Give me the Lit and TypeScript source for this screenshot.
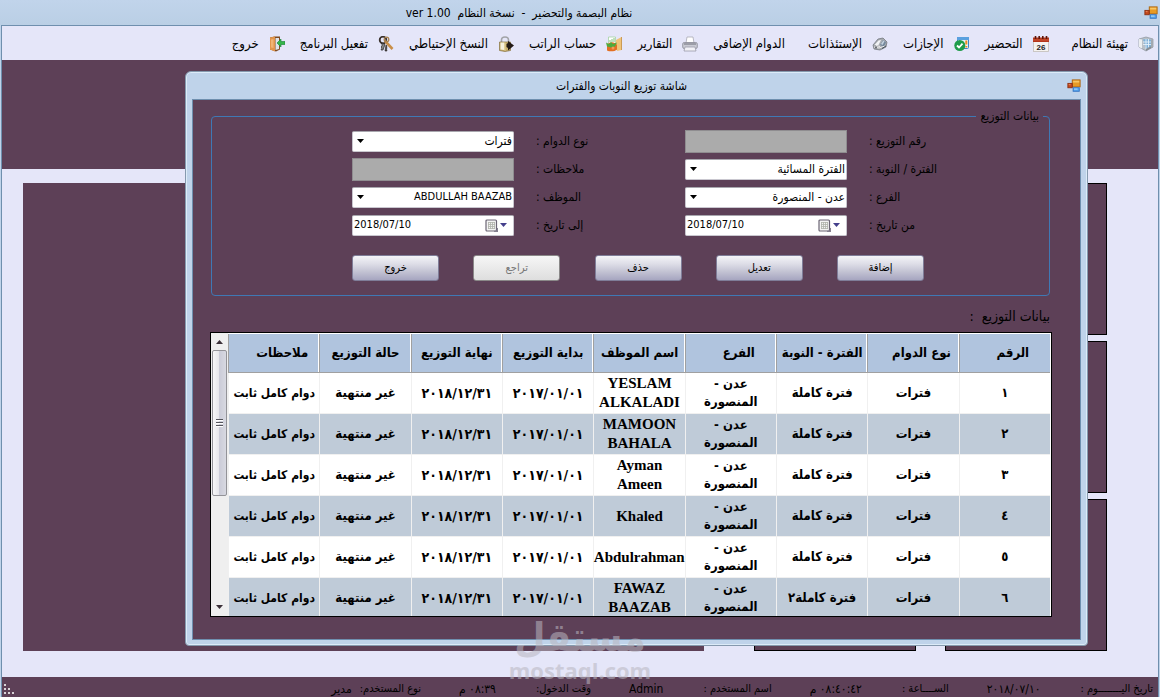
import { LitElement, html, css, svg, nothing } from "lit";
import { customElement, property, state } from "lit/decorators.js";

const icons: Record<string, unknown> = {
  app: svg`<rect x="6" y="1" width="9" height="8" fill="#e79a24" stroke="#a9630f"/><path d="M7 2h7v2H7z" fill="#f7c766"/><rect x="1" y="5" width="5" height="5" fill="#c4481c" stroke="#8b2f10"/><path d="M2 6h2v1H2z" fill="#ef9468"/><rect x="7" y="10" width="7" height="4" fill="#5aa9ee" stroke="#2f6fc0"/><path d="M8 11h4v1H8z" fill="#c1e2ff"/>`,
  setup: svg`<path d="M1 3 8 1l7 2v8l-7 4-7-4z" fill="#b9c0c8" stroke="#8b939c" stroke-width=".7"/><path d="M1 3l3 .5v9L1 11z" fill="#eceff1"/><path d="M5 3.500 8 3l5 .8v6.800L8 13z" fill="#7fb0d8"/><path d="M5 6h8M5 8.500h8M8 3v10M10.500 3v8.500" stroke="#e3f0fa" stroke-width=".9"/><path d="M8 13v2l7-4V9z" fill="#868d94"/><path d="M13 3.500 15 3v8l-2 1z" fill="#a3a9b0"/>`,
  attend: svg`<rect x=".5" y="5" width="15" height="10.500" fill="#f5f3f0" stroke="#c3beb9" stroke-width=".8"/><path d="M0 1.500h16V6H0z" fill="#b5371c"/><path d="M2.500 0v3M6.200 0v3M9.800 0v3M13.500 0v3" stroke="#5d1508" stroke-width="1.600"/><path d="M0 4h16" stroke="#d5643f" stroke-width=".7"/><text x="8" y="13.500" font-size="8" font-weight="bold" font-family="Liberation Sans" text-anchor="middle" fill="#222">26</text>`,
  leave: svg`<rect x="3.500" y="1.500" width="11" height="11" rx="1" fill="#e6f1fb" stroke="#3c84c8"/><path d="M3 1h12v3H3z" fill="#5aa0df"/><path d="M12.300 4.500v4M12.300 10v1.500" stroke="#ef8a1e" stroke-width="2"/><circle cx="5.800" cy="9.500" r="5.500" fill="#1f9c4a"/><path d="m3 9.500 2 2 3.500-3.800" stroke="#fff" stroke-width="1.800" fill="none"/>`,
  permit: svg`<path d="M1 9 6 3l5-1 4 4-1 5-6 3-6-1z" fill="#a7abb0" stroke="#6a6f75" stroke-width=".7"/><path d="m2.500 9 4-4.500L9 4 6.500 9z" fill="#f1f3f5"/><path d="m8 9 3-5 3 2-2 5z" fill="#75899d"/><path d="m9 8 2.200-3.500 1.300.8L10.500 9z" fill="#c5d2de"/><path d="m2 11 5 1 6-2M4 9.500l4 1" stroke="#ececec" fill="none"/><path d="m10 12.500 4-2.500" stroke="#46505a"/><circle cx="4" cy="11.500" r="1" fill="#60656a"/>`,
  reports: svg`<path d="M4 7 5 1h6l1 6z" fill="#fff" stroke="#a9a9b4" stroke-width=".8"/><rect x=".7" y="6.500" width="14.600" height="6" rx="1.500" fill="#c9cad3" stroke="#898a96" stroke-width=".8"/><path d="M2 8h12" stroke="#6f707c"/><path d="M3 11h10l1 4H2z" fill="#f2f2f7" stroke="#9b9ba8" stroke-width=".8"/>`,
  salary: svg`<path d="M2.500 1h7v7h-7z" fill="#fff" stroke="#9ccf9a" stroke-width=".7"/><path d="M4 6V4M6 6V3M8 6V2" stroke="#7fc07c"/><path d="m10 4 5.500-3v13l-4 1-2-2z" fill="#f0c479"/><path d="M15.500 1v13" stroke="#c38c3c" stroke-width=".8"/><path d="M1 9c3-4 8-3 10 0v4.500c-2 2-7 2.500-10 1z" fill="#e36f23"/><path d="m0 6.500 3 1.500 2-2 2 2 4-1.500-2 4-4 1-4-1z" fill="#50aa3d"/><circle cx="7" cy="12" r="1.500" fill="#f39a55"/>`,
  backup: svg`<path d="M3.500 7V4c0-4 7-4 7 0v3" fill="none" stroke="#a2a4a8" stroke-width="1.600"/><path d="M1.500 6h11v8.500l-5.500 1-5.500-1z" fill="#c7ad6a" stroke="#84713f" stroke-width=".7"/><path d="M2.500 6.500H6V14l-3.500-.5z" fill="#f6f0dc"/><path d="M6 6.500h1.500V15L6 14z" fill="#e2cf98"/><path d="m10 5 6 4.500-6 5V12l-1.500-1V8L10 7z" fill="#241a16"/>`,
  activate: svg`<circle cx="5" cy="4" r="3.300" fill="none" stroke="#3a312c" stroke-width="1.800"/><path d="M7 5 14.500 13" stroke="#c98e47" stroke-width="2.600"/><circle cx="8.500" cy="3.500" r="2.300" fill="none" stroke="#a98250" stroke-width="1.300"/><path d="m4 7 3 1.500-2 5.500H3l1-2-1-1 1-1z" fill="#8a8987" stroke="#2a2625" stroke-width=".7"/><path d="m8 9 1 1-.5 1 .5 1-.5 1 .5 2H7z" fill="#4a4644" stroke="#2a2625" stroke-width=".6"/>`,
  exit: svg`<path d="M1 1.500 5.500.5H11v13l-4 2-6-2z" fill="#7e4d24"/><path d="m1 1.500 5-1V15.500l-5-2z" fill="#e2954c"/><path d="M2 3.500l2.500-.5v9L2 11.500z" fill="#f1b474"/><path d="M6.500 2H10v11l-3.500 1z" fill="#dfe3ea"/><path d="m8 7 4-4v2.500h4v3h-4V11z" fill="#34b54b" stroke="#158032" stroke-width=".6"/>`,
  calendar: svg`<rect x="1" y="1" width="10.500" height="11" rx="1" fill="#f3f3f3" stroke="#6c6675" stroke-width="1.200"/><path d="M3 3.500h7M3 5.500h7M3 7.500h7M3 9.500h7M3.500 3v7M5.500 3v7M7.500 3v7M9.500 3v7" stroke="#aeb2a9" stroke-width=".8"/><path d="M9 12.500h3.500V9" fill="none" stroke="#858090" stroke-width="1.300"/>`,
};

const icon = (name: string, box = 16) =>
  html`<svg class="icon" viewBox="0 0 ${box} ${box}" aria-hidden="true">${icons[name]}</svg>`;

const base = css`
  * { box-sizing: border-box; }
  :host { font: 11px/16px "DejaVu Sans Condensed", "DejaVu Sans", Tahoma, sans-serif; color: #000; }
  button, input, select { font: inherit; color: inherit; margin: 0; border: 0; padding: 0; border-radius: 0; }
  .icon { display: block; width: 16px; height: 16px; flex: none; }
`;

interface Shift {
  no: string;
  shift: string;
  employee: string;
}

@customElement("shift-table")
class ShiftTable extends LitElement {
  @property({ attribute: false }) rows: Shift[] = [];

  static styles = [base, css`
    :host { display: flex; height: 285px; border: 1px solid #000; background: #fff; overflow: hidden; }
    .view { flex: 1; min-width: 0; overflow: hidden; padding: 1px 1px 0 0; }
    table { width: 100%; table-layout: fixed; border-collapse: separate; border-spacing: 0; font: bold 15px/19px "Liberation Serif", "DejaVu Sans Condensed", serif; }
    th, td { padding: 0; text-align: center; vertical-align: middle; }
    th { height: 39px; font: bold 13px/18px "DejaVu Sans Condensed", "DejaVu Sans", sans-serif; background: #b0c4de; border-bottom: 1px solid #a0a0a0; border-inline-end: 1px solid #a0a0a0; box-shadow: inset -1px 0 #fff; }
    th:first-child { box-shadow: none; }
    th.narrow { padding-left: 16px; }
    td { height: 41px; border-bottom: 1px solid #f0f0f0; border-inline-end: 1px solid #f0f0f0; }
    td.ar { font: bold 13px/18px "DejaVu Sans Condensed", "DejaVu Sans", sans-serif; }
    td.note { font: bold 12px/18px "DejaVu Sans Condensed", "DejaVu Sans", sans-serif; }
    td.day { font: bold 14px/18px "DejaVu Sans Condensed", "DejaVu Sans", sans-serif; }
    tr:nth-child(even) td { background: #bfcbd8; }
    .bar { width: 17px; flex: none; display: flex; flex-direction: column; background: #efefef; padding: 1px; }
    .step { height: 16px; background: none; display: grid; place-items: center; }
    .step svg { width: 7px; height: 4px; }
    .track { flex: 1; }
    .thumb { height: 146px; border: 1px solid #939398; border-radius: 2px; background: linear-gradient(90deg, #f7f7f8, #e6e6ea 45%, #cbccd8 50%, #d8d9e1); display: grid; place-items: center; }
    .grip { width: 7px; height: 8px; background: repeating-linear-gradient(#55555c 0 1px, #fff 1px 2px, transparent 2px 3px); }
  `];

  render() {
    const heads: [string, string][] = [
      ["الرقم", "narrow"], ["نوع الدوام", "narrow"], ["الفترة - النوبة", ""], ["الفرع", "narrow"], ["اسم الموظف", ""],
      ["بداية التوزيع", ""], ["نهاية التوزيع", ""], ["حالة التوزيع", ""], ["ملاحظات", "narrow"],
    ];
    return html`
      <div class="view">
        <table>
          <thead><tr>${heads.map(([text, kind]) => html`<th class=${kind} scope="col">${text}</th>`)}</tr></thead>
          <tbody>
            ${this.rows.map((r) => html`<tr>
              <td class="ar">${r.no}</td>
              <td class="ar">فترات</td>
              <td class="ar">${r.shift}</td>
              <td class="ar">عدن - المنصورة</td>
              <td>${r.employee}</td>
              <td class="day">٢٠١٧/٠١/٠١</td>
              <td class="day">٢٠١٨/١٢/٣١</td>
              <td class="ar">غير منتهية</td>
              <td class="note">دوام كامل ثابت</td>
            </tr>`)}
          </tbody>
        </table>
      </div>
      <div class="bar">
        <button class="step" aria-label="أعلى"><svg viewBox="0 0 7 4"><path d="M0 4 3.500 0 7 4z" fill="#3b3038"/></svg></button>
        <div class="track"><div class="thumb"><span class="grip"></span></div></div>
        <button class="step" aria-label="أسفل"><svg viewBox="0 0 7 4"><path d="m0 0 3.500 4L7 0z" fill="#3b3038"/></svg></button>
      </div>`;
  }
}

@customElement("shift-dialog")
class ShiftDialog extends LitElement {
  @state() private rows: Shift[] = [
    { no: "١", shift: "فترة كاملة", employee: "YESLAM ALKALADI" },
    { no: "٢", shift: "فترة كاملة", employee: "MAMOON BAHALA" },
    { no: "٣", shift: "فترة كاملة", employee: "Ayman Ameen" },
    { no: "٤", shift: "فترة كاملة", employee: "Khaled" },
    { no: "٥", shift: "فترة كاملة", employee: "Abdulrahman" },
    { no: "٦", shift: "فترة كاملة٢", employee: "FAWAZ BAAZAB" },
  ];

  static styles = [base, css`
    :host { display: block; border: 1px solid #8599ae; border-radius: 6px 6px 4px 4px; background: #bfd3ea; box-shadow: inset 0 0 0 1px #dcebf8; padding: 0 6px 5px; }
    .title { display: flex; align-items: center; height: 27px; }
    .title .icon { width: 14px; height: 14px; }
    h2 { flex: 1; margin: 0; padding-right: 16px; font: inherit; font-size: 12px; text-align: center; }
    .body { border: 1px solid #6f8fae; background: #5d4057; padding: 9px 28px 22px 17px; }
    fieldset { margin: 0 2px 0 1px; min-width: 0; border: 1px solid #3f78b4; border-radius: 4px; padding: 7px 114px 14px 140px; }
    legend { margin: 0 -108px 0 0; padding: 0 4px; font-size: 12px; line-height: 14px; }
    .groups { display: flex; justify-content: space-between; gap: 40px; }
    .group { display: grid; grid-template-columns: 66px 162px; gap: 6px 22px; grid-auto-rows: 22px; align-items: center; }
    label { text-align: left; white-space: nowrap; font-size: 12px; direction: rtl; justify-self: end; }
    .field { width: 100%; height: 21px; display: flex; align-items: center; background: #fff; border: 1px solid #c9c7cf; border-top-color: #a8a7ae; border-radius: 2px; position: relative; }
    input.off { width: 100%; height: 23px; background: #ababab; border: 1px solid #8f8d90; }
    select { appearance: none; width: 100%; height: 19px; background: none; padding: 0 1px 0 20px; font-size: 12px; }
    select.latin { font-size: 11px; }
    .arrow { position: absolute; left: 4px; width: 7px; height: 4px; pointer-events: none; }
    .date { direction: ltr; }
    .date input { flex: 1; min-width: 0; background: none; padding-left: 1px; }
    .pick { display: flex; align-items: center; gap: 2px; background: none; padding-right: 6px; }
    .pick .icon { width: 13px; height: 13px; }
    .pick .drop { width: 7px; height: 4px; }
    .actions { display: flex; justify-content: space-between; margin: 19px 11px 0 0; }
    .actions button { width: 87px; height: 26px; border: 1px solid #7f7d98; border-radius: 3px; background: linear-gradient(#f4f4f8, #dcdce6 35%, #c3c3d3 65%, #a6a5c0); }
    .actions button:disabled { color: #777; border-color: #8a8888; background: linear-gradient(#f6f6f6, #dedede); }
    h3 { margin: 12px 0 8px; font: inherit; font-size: 14px; line-height: 16px; white-space: pre; padding-right: 2px; }
  `];

  private choice(id: string, label: string, value: string, kind = "") {
    return html`<label for=${id}>${label}</label>
      <span class="field">
        <select id=${id} class=${kind}><option>${value}</option></select>
        <svg class="arrow" viewBox="0 0 7 4" aria-hidden="true"><path d="m0 0 3.500 4L7 0z"/></svg>
      </span>`;
  }

  private date(id: string, label: string) {
    return html`<label for=${id}>${label}</label>
      <span class="field date">
        <input id=${id} type="text" value="2018/07/10">
        <button class="pick" aria-label="التقويم">
          ${icon("calendar", 13)}
          <svg class="drop" viewBox="0 0 7 4" aria-hidden="true"><path d="m0 0 3.500 4L7 0z" fill="#443f8c"/></svg>
        </button>
      </span>`;
  }

  render() {
    return html`
      <div class="title">${icon("app")}<h2>شاشة توزيع النوبات والفترات</h2></div>
      <div class="body">
        <fieldset>
          <legend>بيانات التوزيع</legend>
          <div class="groups">
            <div class="group">
              <label for="no">رقم التوزيع :</label><input id="no" class="off" disabled>
              ${this.choice("shift", "الفترة / النوبة :", "الفترة المسائية")}
              ${this.choice("branch", "الفرع :", "عدن - المنصورة")}
              ${this.date("from", "من تاريخ :")}
            </div>
            <div class="group">
              ${this.choice("kind", "نوع الدوام :", "فترات")}
              <label for="notes">ملاحظات :</label><input id="notes" class="off" disabled>
              ${this.choice("employee", "الموظف :", "ABDULLAH BAAZAB", "latin")}
              ${this.date("to", "إلى تاريخ :")}
            </div>
          </div>
          <div class="actions">
            <button>إضافة</button><button>تعديل</button><button>حذف</button><button disabled>تراجع</button><button>خروج</button>
          </div>
        </fieldset>
        <h3>بيانات التوزيع  :</h3>
        <shift-table .rows=${this.rows}></shift-table>
      </div>`;
  }
}

@customElement("app-root")
class AppRoot extends LitElement {
  static styles = [base, css`
    :host { display: flex; flex-direction: column; position: relative; height: 100vh; overflow: hidden; background: #bfd3ea; direction: rtl; }
    .title { flex: none; display: flex; align-items: center; height: 25px; padding: 0 2px 0 0; background: linear-gradient(#c1d4eb, #bacfe5); }
    .title .icon { width: 14px; height: 14px; }
    h1 { flex: 1; margin: 0; padding-right: 106px; font: inherit; font-size: 12px; text-align: center; white-space: pre; }
    .window { flex: 1; min-height: 0; display: flex; flex-direction: column; margin: 0 1px; border: 1px solid #6f8fae; border-bottom: 0; background: #e5e6f9; }
    nav { flex: none; display: flex; align-items: center; gap: 15px; height: 34px; padding: 2px 4px 0; }
    nav button { display: flex; align-items: center; gap: 10px; background: none; font-size: 13px; line-height: 20px; white-space: nowrap; }
    nav .last { margin-left: 8px; }
    .banner { flex: none; height: 109px; background: #5d4057; }
    main { flex: 1; min-height: 0; display: flex; gap: 50px; padding: 14px 51px 26px 21px; }
    .tiles { display: grid; grid-template-columns: 162px 162px; grid-template-rows: repeat(3, 1fr); gap: 6px 29px; }
    .tile { border: 1px solid #000; background: #5d4057; }
    .panel { flex: 1; background: #5d4057; }
    shift-dialog { position: absolute; top: 71px; left: 185px; right: 72px; }
    footer { flex: none; display: flex; height: 20px; padding: 4px 5px 0 0; background: #5d4057; white-space: nowrap; overflow: hidden; align-items: flex-start; }
    dl { display: flex; flex: 1; margin: 0; }
    .entry { display: flex; flex: none; gap: 40px; margin-left: 38px; }
    dt, dd { margin: 0; }
    dd { font-size: 12px; }
    .close { gap: 8px; }
    .size { align-self: center; width: 10px; height: 10px; margin-left: 2px; }
    .mark { position: absolute; top: 616px; left: 0; right: 0; text-align: center; color: #b9b6c0; opacity: .55; font-weight: bold; pointer-events: none; }
    .brand { font-size: 40px; line-height: 43px; }
    .site { font: bold 22px/22px "Open Sans", sans-serif; }
  `];

  private menu = [
    ["setup", "تهيئة النظام", "last"], ["attend", "التحضير", ""], ["leave", "الإجازات", ""], ["permit", "الإستئذانات", "last"], ["", "الدوام الإضافي", ""],
    ["reports", "التقارير", ""], ["salary", "حساب الراتب", ""], ["backup", "النسخ الإحتياطي", ""], ["activate", "تفعيل البرنامج", ""], ["exit", "خروج", ""],
  ];

  private status = [
    ["تاريخ اليــــــــوم :", "٢٠١٨/٠٧/١٠"], ["الســــاعة :", "٠٨:٤٠:٤٢ م"], ["اسم المستخدم :", "Admin"], ["وقت الدخول:", "٠٨:٣٩ م"],
  ];

  render() {
    return html`
      <header class="title">${icon("app")}<h1>نظام البصمة والتحضير  -  نسخة النظام  ver 1.00</h1></header>
      <div class="window">
        <nav>${this.menu.map(([name, text, kind]) => html`<button class=${kind}>${name ? icon(name) : nothing}${text}</button>`)}</nav>
        <div class="banner"></div>
        <main>
          <div class="tiles">${[1, 2, 3, 4, 5, 6].map(() => html`<div class="tile"></div>`)}</div>
          <div class="panel"></div>
        </main>
        <footer>
          <dl>
            ${this.status.map(([k, v]) => html`<div class="entry"><dt>${k}</dt><dd>${v}</dd></div>`)}
            <div class="entry close"><dt>نوع المستخدم:</dt><dd>مدير</dd></div>
          </dl>
          <svg class="size" viewBox="0 0 10 10" aria-hidden="true"><path d="M0 0h2v2H0zM0 4h2v2H0zM4 4h2v2H4zM0 8h2v2H0zM4 8h2v2H4zM8 8h2v2H8z" fill="#d9d3d8"/></svg>
        </footer>
      </div>
      <shift-dialog></shift-dialog>
      <div class="mark"><div class="brand">مستقل</div><div class="site">mostaql.com</div></div>`;
  }
}
